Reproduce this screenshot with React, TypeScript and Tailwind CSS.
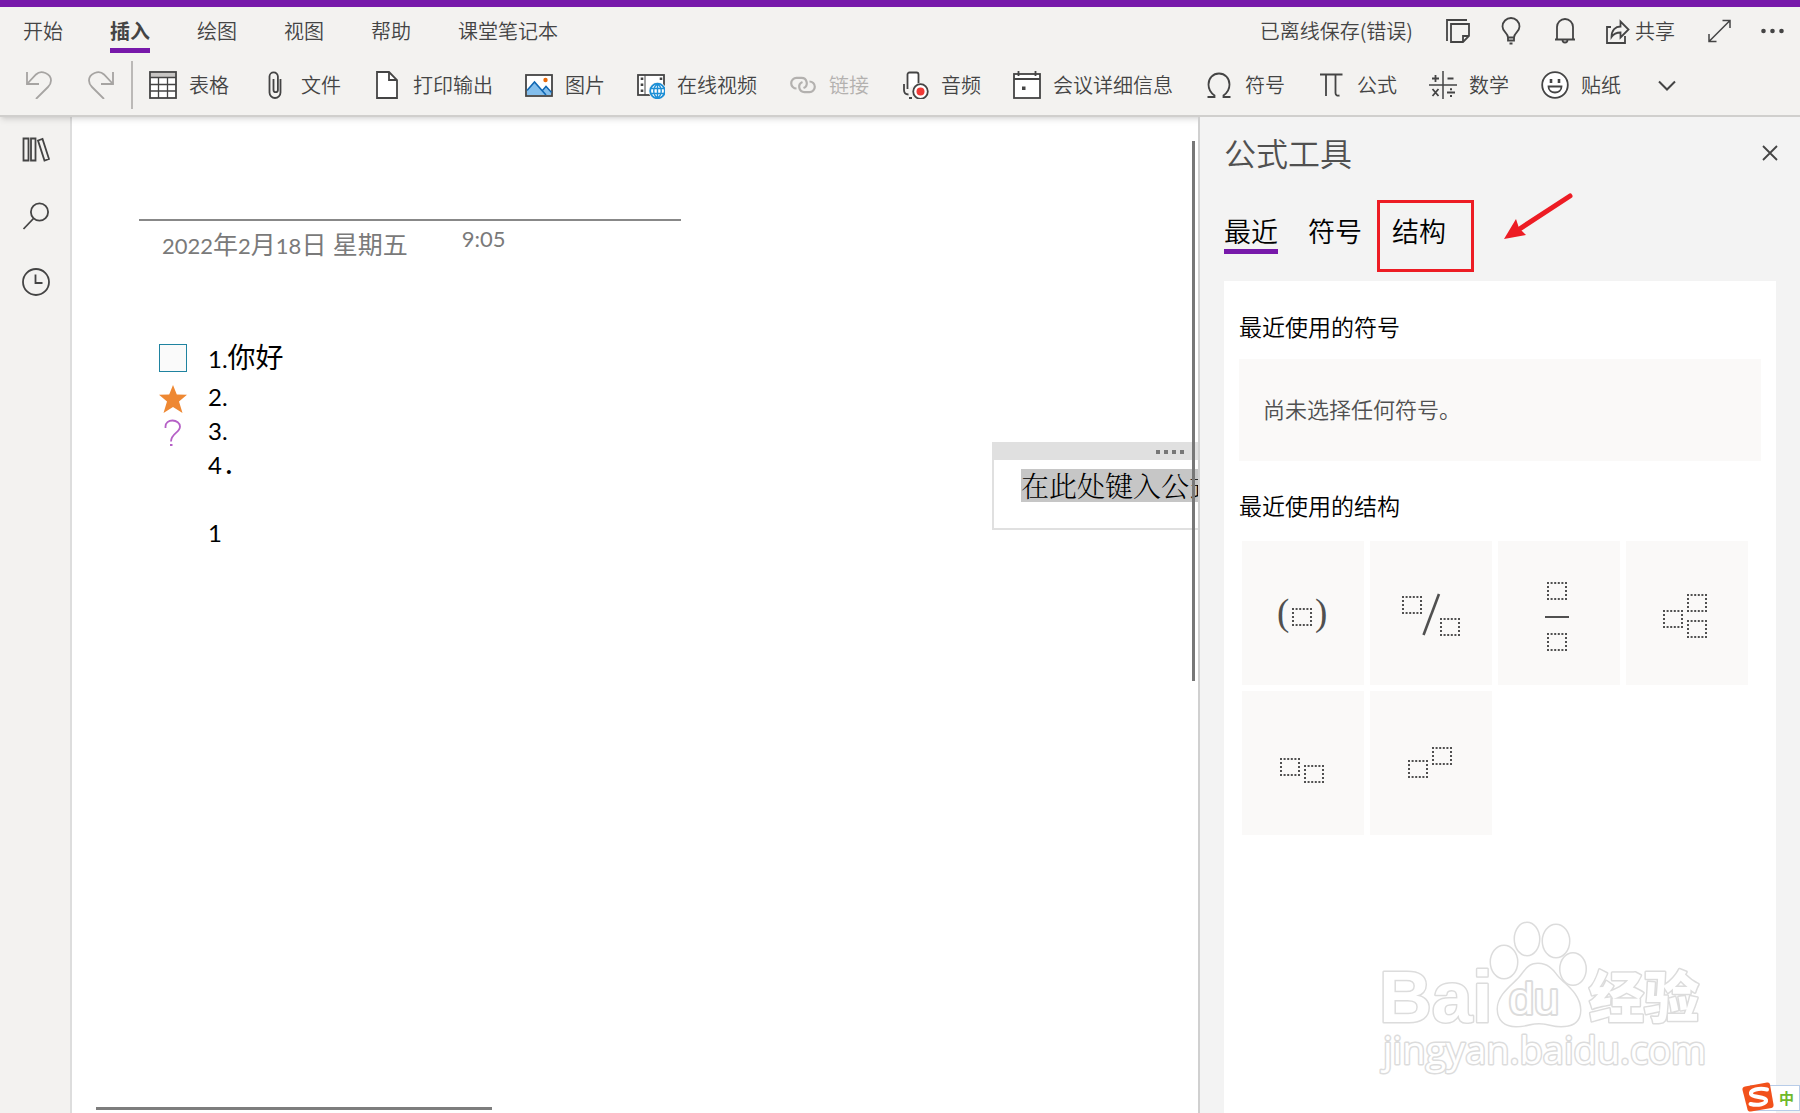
import React, { useState } from 'react';

const ink = '#444444';

type IconProps = { children: React.ReactNode; className?: string };

function Icon({ children, className = 'h-7 w-7' }: IconProps) {
  return (
    <svg
      viewBox="0 0 28 28"
      className={`shrink-0 ${className}`}
      fill="none"
      stroke={ink}
      strokeWidth="1.8"
      aria-hidden="true"
    >
      {children}
    </svg>
  );
}

const menuTabs = ['开始', '插入', '绘图', '视图', '帮助', '课堂笔记本'];

const ribbonItems: { label: string; disabled?: boolean; icon: React.ReactNode }[] = [
  {
    label: '表格',
    icon: (
      <>
        <rect x="1" y="1" width="26" height="26" fill="#fff" />
        <rect x="2" y="2" width="24" height="4" fill="#c8c6c4" stroke="none" />
        <path d="M1 6.5h26M1 13.5h26M1 20h26M9.5 6v21M18.5 6v21" strokeWidth="1.3" />
      </>
    ),
  },
  {
    label: '文件',
    icon: <path d="M19.5 8v13.500a5.500 5.500 0 0 1-11 0V5.500a4.200 4.200 0 0 1 8.400 0V19a2.200 2.200 0 0 1-4.400 0V8" />,
  },
  {
    label: '打印输出',
    icon: (
      <>
        <path d="M4 1h12l8 8v18H4z" fill="#fff" />
        <path d="M16 1v8h8" />
      </>
    ),
  },
  {
    label: '图片',
    icon: (
      <>
        <rect x="1" y="4" width="26" height="21" fill="#fff" />
        <path d="M2 20l7.500-9 8.500 9 3-3.500 5 5.500v2H2z" fill="#83beec" stroke="none" />
        <path d="M2 19.500l7.500-8.500L21 24M17.500 19.500l3.500-4 5.500 6" stroke="#1067b3" strokeWidth="1.6" />
        <circle cx="20.500" cy="9" r="2.200" fill="#ea6a0a" stroke="none" />
      </>
    ),
  },
  {
    label: '在线视频',
    icon: (
      <>
        <rect x="1" y="4" width="26" height="20" fill="#fff" />
        <path d="M8 4v20" strokeWidth="1" />
        <path d="M5 6.500v16M24 6.500v5" strokeWidth="2.600" strokeDasharray="2.600 3.400" />
        <circle cx="20.500" cy="20" r="9" fill="#f3f2f0" stroke="none" />
        <circle cx="20.500" cy="20" r="7.300" fill="#fff" stroke="#1d8fd6" />
        <path
          d="M20.500 12.700v14.600M13.500 17.500h14M13.500 22.500h14M20.500 12.700c-5 4-5 10.600 0 14.600c5-4 5-10.600 0-14.600"
          stroke="#1d8fd6"
          strokeWidth="1.400"
        />
      </>
    ),
  },
  {
    label: '链接',
    disabled: true,
    icon: (
      <g stroke="#b3b1af" strokeWidth="2.200">
        <path d="M7.500 17.500a5.300 5.300 0 0 1 0-10.600h5a5.300 5.300 0 0 1 2 10.200" />
        <path d="M20.500 10.500a5.300 5.300 0 0 1 0 10.600h-5a5.300 5.300 0 0 1-2-10.200" />
      </g>
    ),
  },
  {
    label: '音频',
    icon: (
      <>
        <path d="M6.500 18V3.500a2 2 0 0 1 2-2h7a2 2 0 0 1 2 2V12" fill="#fff" />
        <path d="M3 13v6c0 3 1.500 4.500 4.500 4.500M8 27h3" />
        <circle cx="19.500" cy="20.500" r="7.300" fill="#fff" />
        <circle cx="19.500" cy="20.500" r="4" fill="#f03a37" stroke="none" />
      </>
    ),
  },
  {
    label: '会议详细信息',
    icon: (
      <>
        <rect x="1" y="3" width="26" height="24" fill="#fff" />
        <path d="M1 8h26M5.500 0v5M22.500 0v5" />
        <rect x="9" y="15.500" width="3.500" height="3.500" fill={ink} stroke="none" />
      </>
    ),
  },
  {
    label: '符号',
    icon: (
      <path d="M2.500 26h7v-1.500c-3.500-2.500-6-6-6-11C3.500 7 8 2.500 14 2.500S24.500 7 24.500 13.500c0 5-2.500 8.500-6 11V26h7" />
    ),
  },
  {
    label: '公式',
    icon: <path d="M3 3.500h22.500M9 3.500v21.500M18.500 3.500V22c0 2 1.500 3 4 2.500" />,
  },
  {
    label: '数学',
    icon: (
      <>
        <path d="M14 0v28M0 14h28" strokeWidth="1.500" />
        <path d="M3 7.500h7M6.500 4v7M18.500 7.500h6M3.500 18l6 7M9.500 18l-6 7M18 21.500h8" />
        <path d="M21 18.200h2M21 25h2" strokeWidth="2" />
      </>
    ),
  },
  {
    label: '贴纸',
    icon: (
      <>
        <circle cx="14" cy="14" r="12.800" fill="#fff" />
        <path d="M7.500 15.500h13c0 8-13 8-13 0z" />
        <path d="M10 8v4M18 8v4" strokeWidth="2.600" />
      </>
    ),
  },
];

// dotted placeholder used inside the formula structures
function Slot({ x, y }: { x: number; y: number }) {
  return (
    <g stroke="#505050" strokeWidth="2">
      <path d={`M${x} ${y + 1}h20M${x} ${y + 17}h20`} strokeDasharray="2 1.600" />
      <path d={`M${x + 1} ${y}v18M${x + 19} ${y}v18`} strokeDasharray="2 2" />
    </g>
  );
}

const structures: { name: string; drawing: React.ReactNode }[] = [
  {
    name: '括号',
    drawing: (
      <>
        <g fill="#505050" fontFamily="Liberation Serif, serif" fontSize="37">
          <text x="35" y="84">(</text>
          <text x="73" y="84">)</text>
        </g>
        <Slot x={50} y={67} />
      </>
    ),
  },
  {
    name: '斜分数',
    drawing: (
      <>
        <Slot x={32} y={55} />
        <path d="M53.500 94L69 53" stroke="#505050" strokeWidth="2.600" />
        <Slot x={70} y={77} />
      </>
    ),
  },
  {
    name: '分数',
    drawing: (
      <>
        <Slot x={49} y={41} />
        <path d="M47 76h24" stroke="#505050" strokeWidth="2" />
        <Slot x={49} y={92} />
      </>
    ),
  },
  {
    name: '上下标',
    drawing: (
      <>
        <Slot x={37} y={69} />
        <Slot x={61} y={53} />
        <Slot x={61} y={79} />
      </>
    ),
  },
  {
    name: '下标',
    drawing: (
      <>
        <Slot x={38} y={67} />
        <Slot x={62} y={74} />
      </>
    ),
  },
  {
    name: '上标',
    drawing: (
      <>
        <Slot x={38} y={69} />
        <Slot x={62} y={56} />
      </>
    ),
  },
];

function Header() {
  const [active, setActive] = useState('插入');

  return (
    <header className="relative z-20 shrink-0 border-t-[7px] border-b-2 border-t-[#7719aa] border-b-[#d0cfcd] bg-[#f3f2f0] text-xl text-[#444444] shadow-md">
      <div className="flex h-[50px] items-start justify-between pt-[10px] pr-[13px] pl-[23px]">
        <nav className="flex gap-[47px]">
          {menuTabs.map((tab) => (
            <button
              key={tab}
              onClick={() => setActive(tab)}
              className={`border-b-[5px] pb-[3px] leading-7 whitespace-nowrap ${
                active === tab ? 'border-[#7719aa] font-bold' : 'border-transparent font-[350]'
              }`}
            >
              {tab}
            </button>
          ))}
        </nav>

        <div className="flex items-center font-[350]">
          <span className="leading-7 whitespace-nowrap">已离线保存(错误)</span>
          <button aria-label="便笺" className="ml-[30px]">
            <Icon>
              <path d="M4 24V3h20M8 7h18v12l-6 6H8z" fill="none" />
              <path d="M20 25v-6h6" />
            </Icon>
          </button>
          <button aria-label="提示" className="ml-[26px]">
            <Icon>
              <path d="M11 20.500c0-5-5.500-5.500-5.500-11a8.500 8.500 0 0 1 17 0c0 5.500-5.500 6-5.500 11z" />
              <path d="M11 20.500v3h6v-3M12.500 26.500h3" />
            </Icon>
          </button>
          <button aria-label="通知" className="ml-[26px]">
            <Icon>
              <path d="M6 22V10a8 8 0 0 1 16 0v12M4 22.500h20M11.500 23a2.500 2.500 0 0 0 5 0" />
            </Icon>
          </button>
          <button className="ml-6 flex items-center gap-1 leading-7">
            <Icon>
              <path d="M8 10H4v16h18v-7" />
              <path d="M8.500 20c0-7 4-10.500 9-10.500V4.500l8 8-8 8v-5c-4 0-7 1.500-9 4.500z" />
            </Icon>
            共享
          </button>
          <button aria-label="全屏" className="ml-[30px]">
            <Icon>
              <path d="M4 24.500L25 3.500M17.500 3.500H25V11M4 17v7.500h7.500" strokeWidth="1.500" />
            </Icon>
          </button>
          <button aria-label="更多" className="ml-[26px]">
            <Icon>
              <g fill={ink} stroke="none">
                <circle cx="4.500" cy="14" r="2.300" />
                <circle cx="13.500" cy="14" r="2.300" />
                <circle cx="22.500" cy="14" r="2.300" />
              </g>
            </Icon>
          </button>
        </div>
      </div>

      <div className="flex h-[58px] items-center pb-[2px] pl-[25px] font-[350]">
        <button aria-label="撤消" className="mr-[34px]">
          <Icon>
            <g stroke="#a6a4a2">
              <path d="M2 1v12h12" />
              <path d="M2 13L11 3.500c5-5 15-1 15 6 0 3-1 4.500-3 6.500L11 28" />
            </g>
          </Icon>
        </button>
        <button aria-label="恢复" className="mr-4">
          <Icon>
            <g stroke="#a6a4a2">
              <path d="M26 1v12H14" />
              <path d="M26 13L17 3.500c-5-5-15-1-15 6 0 3 1 4.500 3 6.500L17 28" />
            </g>
          </Icon>
        </button>
        <div className="mr-4 h-12 w-[2px] bg-[#bbb9b7]" />
        <div className="flex items-center gap-8">
          {ribbonItems.map((item) => (
            <button
              key={item.label}
              disabled={item.disabled}
              className="flex items-center gap-3 leading-7 whitespace-nowrap disabled:text-[#b3b1af]"
            >
              <Icon>{item.icon}</Icon>
              {item.label}
            </button>
          ))}
          <button aria-label="更多命令">
            <Icon>
              <path d="M6 10.500l8 8 8-8" strokeWidth="2" />
            </Icon>
          </button>
        </div>
      </div>
    </header>
  );
}

function Sidebar() {
  return (
    <aside className="flex w-[72px] shrink-0 flex-col items-center gap-[38px] border-r-2 border-[#dddddd] bg-[#f3f2f0] pt-[19px] pl-[2px]">
      <button aria-label="笔记本">
        <Icon>
          <path d="M1.500 2.500h5v22h-5zM9 2.500h4.500v22H9zM16 4.500l4.500-1.500 6.500 20-4.500 1.500z" />
        </Icon>
      </button>
      <button aria-label="搜索">
        <Icon>
          <circle cx="17.500" cy="10" r="8.600" />
          <path d="M11.500 16.500L1.500 27" />
        </Icon>
      </button>
      <button aria-label="最近的笔记">
        <Icon>
          <circle cx="14" cy="14" r="13" />
          <path d="M13.500 6.500V15h7" />
        </Icon>
      </button>
    </aside>
  );
}

function Editor() {
  return (
    <main className="relative min-w-0 flex-1 overflow-hidden bg-white">
      <div className="ml-[67px] pt-[102px]">
        <div className="h-[2px] w-[542px] bg-[#888888]" />
        <div className="flex h-[45px] gap-[54px] pt-1 pl-[23px] text-[#7a7a7a]">
          <time className="pt-[5px] font-['Lato','Noto_Sans_CJK_SC',sans-serif] text-[22px] leading-7 whitespace-nowrap">
            2022<span className="text-[25px]">年</span>2<span className="text-[25px]">月</span>18
            <span className="text-[25px]">日 星期五</span>
          </time>
          <time className="font-['Lato',sans-serif] text-[22px] leading-7">9:05</time>
        </div>

        <div className="mt-[70px] pl-5 font-['Lato','Noto_Sans_CJK_SC',sans-serif] text-2xl leading-[34px] text-black">
          <div className="flex h-11 items-center gap-[21px]">
            <input
              type="checkbox"
              aria-label="待办事项"
              className="h-7 w-7 shrink-0 appearance-none border border-[#1f83a0] bg-[#fafafa]"
            />
            <span>
              1.<span className="text-[28px]">你好</span>
            </span>
          </div>
          <div className="flex h-[34px] items-center gap-[21px]">
            <svg viewBox="0 0 28 28" className="mt-1 h-7 w-7" aria-hidden="true">
              <path d="M14 0l3.800 9.500 10.200.3-8 6.700 3.500 11.500L14 22l-9.500 6L8 16.500 0 9.800l10.200-.3z" fill="#ee8833" />
            </svg>
            <span>2.</span>
          </div>
          <div className="flex h-[34px] items-center gap-[21px]">
            <svg viewBox="0 0 28 28" className="mt-1 h-7 w-7" fill="none" stroke="#b560c6" strokeWidth="1.800" aria-hidden="true">
              <path d="M6.500 9V7.500C6.500 4 9.500 1.500 13.500 1.500s7.500 2.500 7.500 6c0 6.500-9 6.500-9 15" />
              <path d="M11 26h2.500" strokeWidth="2" />
            </svg>
            <span>3.</span>
          </div>
          <p className="h-[34px] pl-[49px]">
            4<span className="pl-1 font-black">.</span>
          </p>
          <p className="h-[34px]" />
          <p className="h-[34px] pl-[49px]">1</p>
        </div>
      </div>

      {/* free floating note container */}
      <div className="absolute top-[325px] left-[920px] h-[88px] w-[372px] border-2 border-[#e0e0e0] bg-white">
        <div className="flex h-4 items-center gap-1 bg-[#e0e0e0] pl-[162px]">
          <i className="h-1 w-1 bg-[#777777]" />
          <i className="h-1 w-1 bg-[#777777]" />
          <i className="h-1 w-1 bg-[#777777]" />
          <i className="h-1 w-1 bg-[#777777]" />
        </div>
        <p className="mt-[9px] ml-[27px] inline-block bg-[#c6c6c6] font-['Noto_Serif_CJK_SC','Noto_Sans_CJK_SC',serif] text-[28px] leading-[33px] font-light whitespace-nowrap text-black">
          在此处键入公式。
        </p>
      </div>

      {/* scroll thumbs */}
      <div className="absolute top-6 right-[3px] h-[540px] w-[3px] bg-[#777777]" />
      <div className="absolute bottom-[3px] left-6 h-[3px] w-[396px] bg-[#7d7d7d]" />
    </main>
  );
}

function Watermark() {
  return (
    <svg
      viewBox="0 0 350 168"
      className="pointer-events-none absolute right-[80px] bottom-[31px] h-[168px] w-[350px]"
      fill="#fff"
      stroke="#dcdcdc"
      strokeWidth="3"
      strokeLinejoin="round"
      style={{ paintOrder: 'stroke' }}
      aria-hidden="true"
    >
      <text x="9" y="108" fontFamily="Liberation Sans, sans-serif" fontWeight="700" fontSize="73">Bai</text>
      <ellipse cx="134" cy="48" rx="13" ry="16" />
      <ellipse cx="157" cy="25" rx="12" ry="16" />
      <ellipse cx="186" cy="27" rx="13" ry="16" />
      <ellipse cx="203" cy="55" rx="12.500" ry="15.500" />
      <path d="M168 50c9 0 14 5 19 12s23 17 23 34c0 12-8 16-19 16-9 0-13-3-22-3s-13 3-23 3c-11 0-18-6-18-17 0-15 17-25 23-33s9-12 17-12z" />
      <text x="139" y="100" fontFamily="Liberation Sans, sans-serif" fontSize="45" strokeWidth="4">du</text>
      <text x="219" y="103" fontFamily="Noto Sans CJK SC, sans-serif" fontWeight="900" fontSize="55">经验</text>
      <text x="13" y="150" fontFamily="Open Sans, sans-serif" fontSize="38">jingyan.baidu.com</text>
    </svg>
  );
}

function FormulaPanel() {
  const [tab, setTab] = useState('最近');

  return (
    <aside className="relative z-30 flex w-[602px] shrink-0 flex-col border-l-2 border-[#d0d0d0] bg-[#f3f3f3] px-6 pt-[15px]">
      <div className="flex items-center justify-between">
        <h1 className="text-[32px] leading-10 font-[350] text-[#505050]">公式工具</h1>
        <button aria-label="关闭" className="-mr-2">
          <Icon>
            <path d="M7 8l14 14M21 8L7 22" />
          </Icon>
        </button>
      </div>

      <div className="mt-[41px] flex gap-[30px]">
        {['最近', '符号', '结构'].map((name) => (
          <button
            key={name}
            onClick={() => setTab(name)}
            className={`border-b-[5px] text-[27px] leading-9 font-[350] text-black ${
              tab === name ? 'border-[#7719aa]' : 'border-transparent'
            }`}
          >
            {name}
          </button>
        ))}
      </div>
      <div className="absolute top-[83px] left-[177px] h-[72px] w-[97px] border-[3px] border-[#ed1c24]" />
      <svg viewBox="0 0 70 50" className="absolute top-[75px] left-[304px] h-[50px] w-[70px]" aria-hidden="true">
        <path d="M66 4L14 38" stroke="#ed1c24" strokeWidth="5" strokeLinecap="round" />
        <path d="M0 47L12 27l3 9 7 7z" fill="#ed1c24" />
      </svg>

      <section className="mt-[27px] flex-1 bg-white px-[15px] pt-[29px] text-black">
        <h2 className="text-[23px] leading-8 font-[350]">最近使用的符号</h2>
        <p className="mt-[17px] bg-[#faf9f8] px-6 pt-[33px] pb-[36px] text-[22px] leading-[33px] font-[350] text-[#505050]">
          尚未选择任何符号。
        </p>
        <h2 className="mt-7 text-[23px] leading-8 font-[350]">最近使用的结构</h2>
        <div className="mt-5 ml-[3px] flex flex-wrap gap-[6px]">
          {structures.map((s) => (
            <button key={s.name} aria-label={s.name} className="h-36 w-[122px] bg-[#faf9f8]">
              <svg viewBox="0 0 122 144" className="h-36 w-[122px]" fill="none">
                {s.drawing}
              </svg>
            </button>
          ))}
        </div>
      </section>

      <Watermark />

      {/* input method badge */}
      <div className="absolute right-0 bottom-[2px] flex h-[26px] w-[50px] items-center justify-end border border-[#b8cce8] bg-white pr-[5px] text-[15px] font-bold text-[#6fb92c]">
        中
        <svg viewBox="0 0 32 30" className="absolute -top-1 -left-[9px] h-[30px] w-8" aria-hidden="true">
          <path d="M3 4.500L25 .5c2-.3 2.500.5 3 2l3.500 20c.3 2-.5 3-2 3.500L9 29.500c-2 .3-3-.3-3.500-2L.5 8c-.4-2 .5-3 2.500-3.500z" fill="#f2511b" />
          <path d="M25 7.500C17 5.500 8 8 9 12s14 2 15 6c.8 4-8 6-15.500 4" fill="none" stroke="#fff" strokeWidth="4" strokeLinecap="round" />
        </svg>
      </div>
    </aside>
  );
}

export default function App() {
  return (
    <div className="flex h-screen flex-col overflow-hidden bg-white font-['Noto_Sans_CJK_SC',sans-serif]">
      <Header />
      <div className="flex min-h-0 flex-1">
        <Sidebar />
        <Editor />
        <FormulaPanel />
      </div>
    </div>
  );
}
